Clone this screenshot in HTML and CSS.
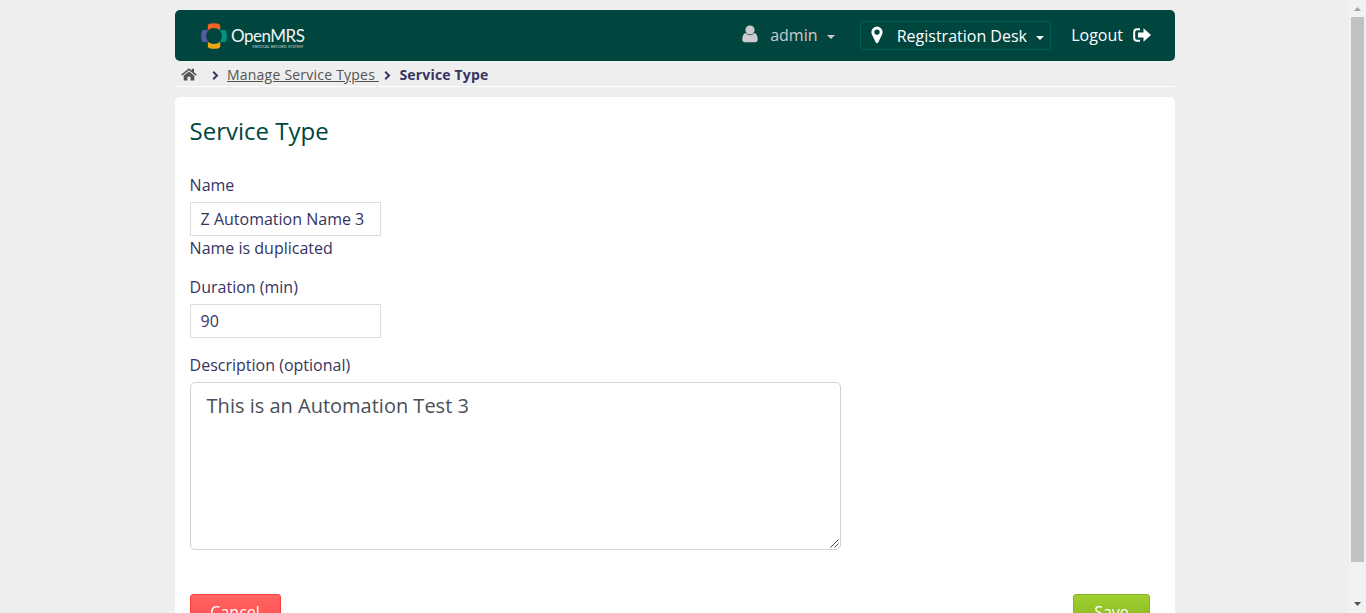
FILE: index.html
```html
<!DOCTYPE html>
<html lang="en">
<head>
<meta charset="utf-8">
<title>Service Type</title>
<link rel="stylesheet" href="styles.css">
</head>
<body>
<div class="viewport">
  <div class="page">
    <header class="topbar">
      <a class="logo">
        <svg class="logo-mark" width="26" height="26" viewBox="0 0 26 26">
          <path fill="#f26522" d="M6.800 7.200V2.500Q7 .2 13 .2T19.200 2.500V7.200Q16 5 13 5T6.800 7.200Z"/>
          <path fill="#eea616" d="M6.800 18.800V23.500Q7 25.800 13 25.800T19.200 23.500V18.800Q16 21 13 21T6.800 18.800Z"/>
          <path fill="#5b57a6" d="M6.300 7H2.500Q.2 7 .2 13T2.500 19H6.300L7 18.200Q5 16 5 13T7 7.800Z"/>
          <path fill="#009384" d="M19.700 7H23.500Q25.800 7 25.800 13T23.500 19H19.700L19 18.200Q21 16 21 13T19 7.800Z"/>
        </svg>
        <span class="logo-text"><span class="logo-name">OpenMRS</span><span class="logo-sub">MEDICAL RECORD SYSTEM</span></span>
      </a>
      <nav class="user-nav">
        <span class="account">
          <svg width="16" height="18" viewBox="0 0 16 18" fill="#ccc"><circle cx="8" cy="5" r="4.600"/><path d="M3.500 8Q8 12.500 12.500 8Q15.700 9 15.700 14.500Q15.700 17.300 13 17.300H3Q.3 17.300 .3 14.500Q.3 9 3.500 8Z"/></svg>
          <span class="account-name">admin</span><i class="caret"></i>
        </span>
        <span class="location">
          <svg width="12" height="18" viewBox="0 0 12 18" fill="#fff"><path fill-rule="evenodd" d="M6 .5A5.600 5.600 0 0 1 11.600 6.100Q11.600 7.500 11 8.800L7.200 16.500Q6 18 4.800 16.500L1 8.800Q.4 7.500 .4 6.100A5.600 5.600 0 0 1 6 .5ZM6 3.400A2.700 2.700 0 1 0 6 8.800A2.700 2.700 0 1 0 6 3.400Z"/></svg>
          <span class="location-name">Registration Desk</span><i class="caret"></i>
        </span>
        <span class="logout"><span>Logout</span>
          <svg width="18" height="14" viewBox="0 0 18 14"><path fill="none" stroke="#fff" stroke-width="2" d="M7 1.200H4Q1.200 1.200 1.200 4V10Q1.200 12.800 4 12.800H7"/><path fill="#fff" d="M5 4.500H10.500V.3L18 7L10.500 13.700V9.500H5Z"/></svg>
        </span>
      </nav>
    </header>
    <div class="crumbs">
      <svg class="home" width="16" height="13" viewBox="0 0 16 13" fill="#555"><path d="M.2 6.500L8 .2L10.800 2.500V.8H13V4.300L15.800 6.500L14.800 7.700L8 2.200L1.200 7.700Z"/><path d="M2.700 7.700L8 3.400L13.300 7.700V12.500H9.500V8.700H6.500V12.500H2.700Z"/></svg>
      <svg class="chev first" width="7" height="9" viewBox="0 0 7 9"><path d="M1.200 .8L5 4.500L1.200 8.200"/></svg>
      <a class="crumb-link">Manage Service Types&nbsp;</a>
      <svg class="chev" width="7" height="9" viewBox="0 0 7 9"><path d="M1.200 .8L5 4.500L1.200 8.200"/></svg>
      <span class="current">Service Type</span>
    </div>
    <main class="content">
      <h2 class="title">Service Type</h2>
      <label class="label">Name</label>
      <div class="field">Z Automation Name 3</div>
      <div class="error">Name is duplicated</div>
      <label class="label">Duration (min)</label>
      <div class="field spaced">90</div>
      <label class="label">Description (optional)</label>
      <div class="textarea"><span>This is an Automation Test 3</span>
        <svg class="grip" width="9" height="9" viewBox="0 0 9 9"><path d="M.5 8.500L8.500 .5M4.500 8.500L8.500 4.500"/></svg>
      </div>
      <div class="actions"><button class="btn cancel">Cancel</button><button class="btn save">Save</button></div>
    </main>
  </div>
  <div class="scrollbar">
    <svg width="7" height="4" viewBox="0 0 7 4" fill="#a3a3a3"><path d="M0 4L3.500 0L7 4Z"/></svg>
    <div class="thumb"></div>
    <svg class="down" width="7" height="4" viewBox="0 0 7 4" fill="#505050"><path d="M0 0H7L3.500 4Z"/></svg>
  </div>
</div>
</body>
</html>
```
FILE: styles.css
```css
* { box-sizing: border-box; }
body { margin: 0; overflow: hidden; background: #eee; color: #363463; font: 16px/24px "Open Sans", sans-serif; }
svg { display: block; flex: none; }
.viewport { display: flex; height: 613px; overflow: hidden; }
.page { width: 1000px; margin: 10px 174px 0 175px; flex: none; }
.topbar { display: flex; justify-content: space-between; height: 51px; background: #00463f; border-radius: 5px; padding: 0 24px 0 26px; }
.logo { display: flex; padding-top: 13px; gap: 4px; color: #fff; }
.logo-text { display: flex; flex-direction: column; width: 75px; padding-top: 3px; }
.logo-name { font: 17px/20px Lato, sans-serif; letter-spacing: -.5px; white-space: nowrap; color: #f0f5f4; }
.logo-sub { font: 4px/4px Lato, sans-serif; letter-spacing: 0; align-self: flex-end; white-space: nowrap; color: #c5d5d2; margin: -1px 3px 0 0; }
.user-nav { display: flex; color: #fff; }
.account { display: flex; width: 118px; color: #ccc; padding-top: 13px; }
.account svg { margin: 2px 12px 0 0; }
.caret { width: 0; height: 0; border: 4px solid transparent; border-top-color: currentColor; border-bottom: 0; margin: 12px 0 0 9px; }
.location { display: flex; width: 191px; height: 29px; border: 1px solid #005f56; border-radius: 3px; margin-top: 11px; padding: 2px 0 0 10px; }
.location svg { margin: 2px 13.5px 0 0; }
.logout { display: flex; gap: 10px; margin-left: 20px; padding-top: 13px; }
.logout svg { margin-top: 5px; }
.crumbs { display: flex; height: 26px; border-bottom: 1px solid #fff; padding-left: 6px; font-size: 14px; line-height: 27px; white-space: nowrap; }
.home { margin-top: 7px; }
.chev { margin: 10px 8px 0 5.5px; fill: none; stroke: #363463; stroke-width: 2; }
.chev.first { margin: 10px 8px 0 15px; }
.crumb-link { color: #555; text-decoration: underline; letter-spacing: .22px; }
.current { font-weight: 700; letter-spacing: .18px; }
.content { margin-top: 10px; background: #fff; border-radius: 5px; padding: 19px 25px 20px 14.6px; height: 560px; }
.title { margin: 0 0 27px; font-size: 24px; line-height: 30px; font-weight: 400; color: #00463f; }
.label { display: block; height: 29px; line-height: 24px; }
.field { width: 191px; height: 34px; border: 1px solid #ddd; padding: 0 10px; line-height: 32px; white-space: nowrap; }
.error { height: 39px; line-height: 24px; }
.spaced { margin-bottom: 15px; }
.textarea { position: relative; width: 651px; height: 168px; border: 1px solid #ced4da; border-radius: 5px; padding: 8px 16px; color: #495057; font-size: 20px; line-height: 30px; }
.grip { position: absolute; right: 1px; bottom: 1px; fill: none; stroke: #444; }
.actions { display: flex; justify-content: space-between; margin-top: 44px; }
.btn { height: 36px; padding: 0; border-radius: 3px; font: 16px/34px "Open Sans", sans-serif; color: #fff; }
.cancel { width: 91px; background: linear-gradient(#ff6464, #ff4a4a); border: 1px solid #ff3d3d; }
.save { width: 77px; background: linear-gradient(#a1d12f, #83b023); border: 1px solid #88af28; }
.scrollbar { display: flex; flex-direction: column; align-items: center; width: 17px; flex: none; background: #f1f1f1; padding: 7px 0 6px; }
.thumb { width: 13px; height: 545px; margin-top: 6px; background: #c1c1c1; }
.down { margin-top: 40px; }
```
